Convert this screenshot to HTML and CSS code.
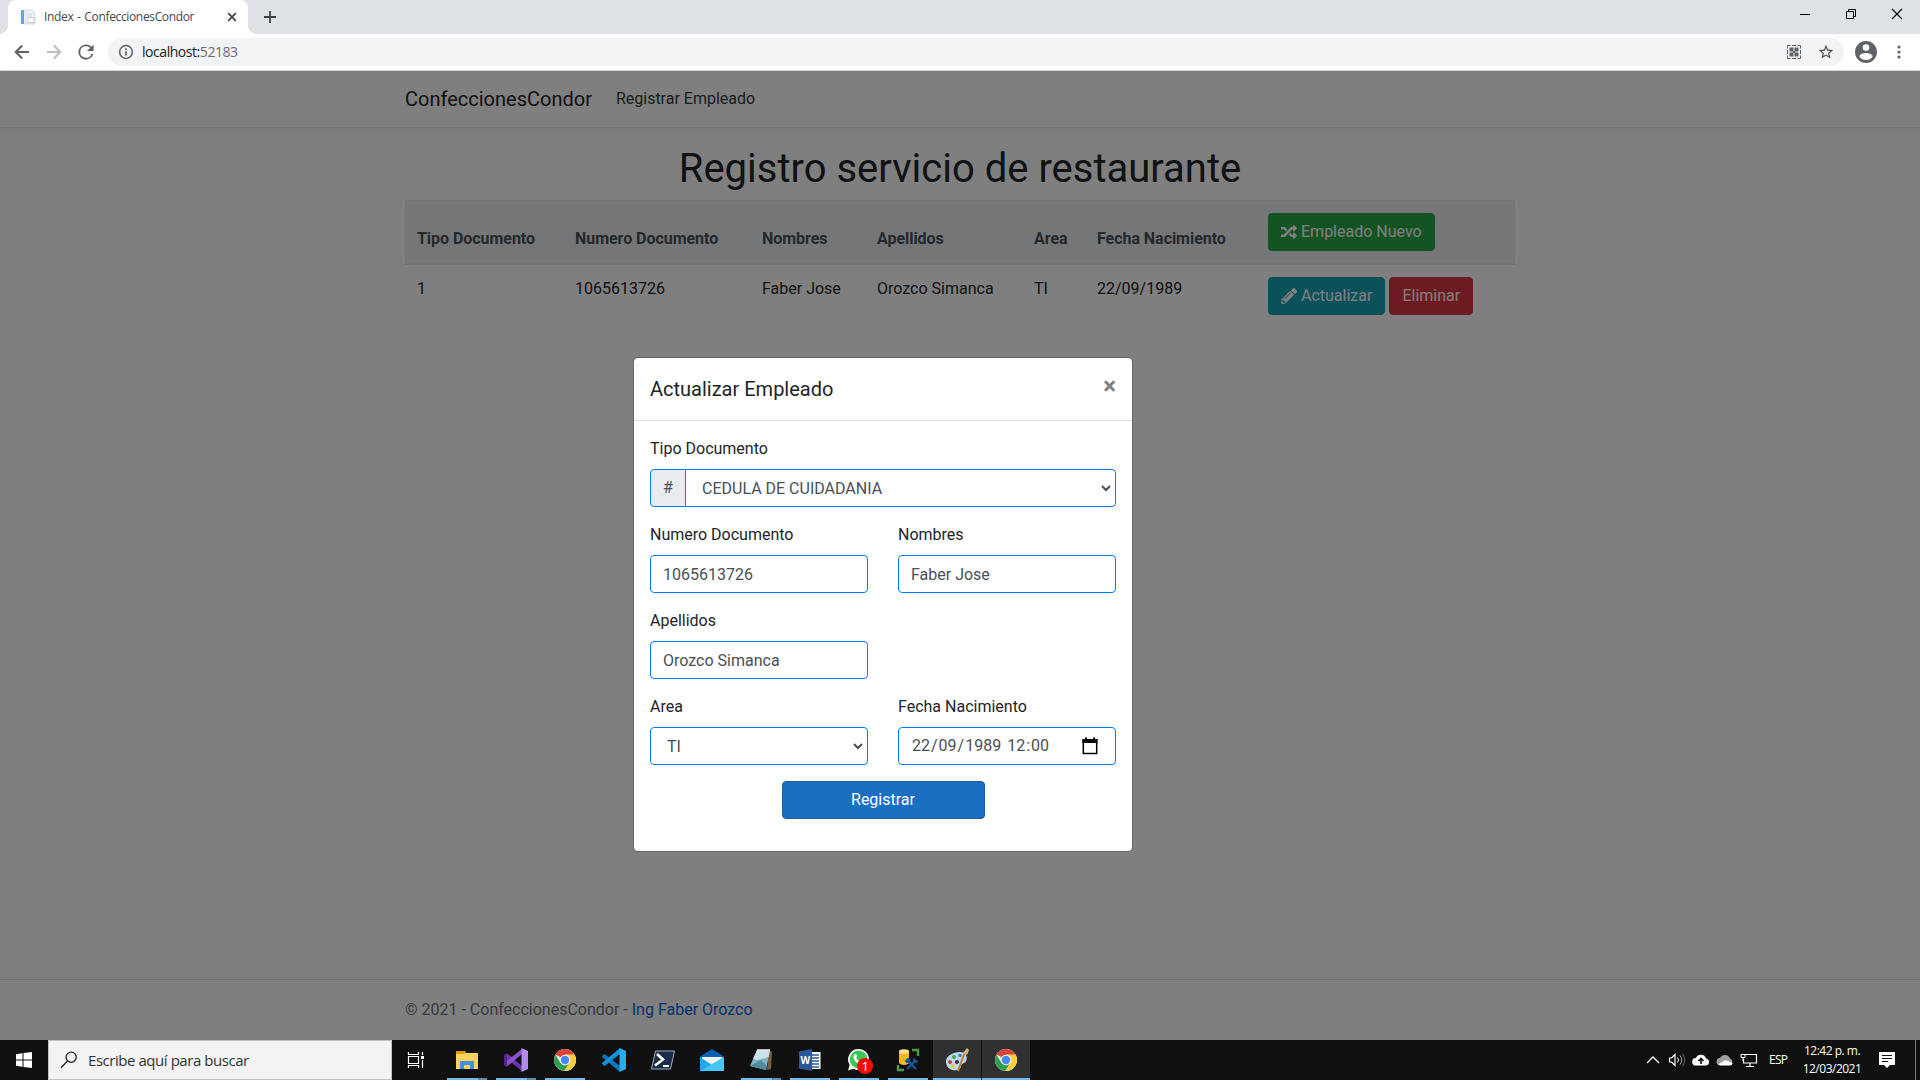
FILE: index.html
```html
<!DOCTYPE html>
<html lang="es">
<head>
<meta charset="utf-8">
<title>Index - ConfeccionesCondor</title>
<link rel="stylesheet" href="styles.css">
</head>
<body>
<svg class="defs" width="0" height="0">
  <symbol id="chrome" viewBox="0 0 24 24">
    <circle cx="12" cy="12" r="11" fill="#fff"/>
    <path d="M12 12 2.500 6.500A11 11 0 0 1 21.600 6.700H12Z" fill="#d9453a"/>
    <path d="M2.500 6.500A11 11 0 0 0 11.400 23L16.600 14.700 12 12 7.400 14.700Z" fill="#2f9e4f"/>
    <path d="M21.600 6.700A11 11 0 0 1 11.400 23L16.600 14.700 12 6.700Z" fill="#fccd3a"/>
    <circle cx="12" cy="12" r="5.300" fill="#f4f4f4"/>
    <circle cx="12" cy="12" r="4.200" fill="#4587f3"/>
  </symbol>
  <symbol id="caret" viewBox="0 0 10 10"><path d="M1 3 5 7 9 3" fill="none" stroke="#495057" stroke-width="2"/></symbol>
</svg>

<header class="browser">
  <div class="tabstrip">
    <div class="tab">
      <svg class="favicon" width="16" height="16" viewBox="0 0 16 16"><rect x="1" y="1" width="3" height="14" fill="#64a6d4"/><path d="M5 1h7l3 3v11H5Z" fill="#eef1f5" stroke="#c9ced6" stroke-width=".8"/><path d="M7 5h5M7 7h5" stroke="#d3d8df"/><rect x="8" y="8.500" width="6" height="5" fill="#fff" stroke="#bcc2cc" stroke-width=".8"/></svg>
      <span class="tab-title">Index - ConfeccionesCondor</span>
      <svg class="tab-close" width="10" height="10" viewBox="0 0 10 10"><path d="M1.200 1.200 8.800 8.800M8.800 1.200 1.200 8.800" stroke="#3c4043" stroke-width="1.700"/></svg>
    </div>
    <svg class="new-tab" width="12" height="12" viewBox="0 0 12 12"><path d="M6 0v12M0 6h12" stroke="#3c4043" stroke-width="1.800"/></svg>
    <div class="window-buttons">
      <svg width="46" height="28" viewBox="0 0 46 28"><path d="M18 14.500h10" stroke="#000"/></svg>
      <svg width="46" height="28" viewBox="0 0 46 28"><path d="M18.500 11.500h7v7h-7ZM20.500 11.500v-2h7v7h-2" fill="none" stroke="#000"/></svg>
      <svg width="46" height="28" viewBox="0 0 46 28"><path d="M18 9l10 10M28 9 18 19" stroke="#000" stroke-width="1.100"/></svg>
    </div>
  </div>
  <div class="toolbar">
    <div class="nav-buttons">
      <svg width="16" height="16" viewBox="0 0 16 16"><path d="M15 8H2M8.200 1.500 1.700 8l6.500 6.500" fill="none" stroke="#5f6368" stroke-width="2"/></svg>
      <svg width="16" height="16" viewBox="0 0 16 16"><path d="M1 8h13M7.800 1.500 14.300 8l-6.500 6.500" fill="none" stroke="#bdbfc2" stroke-width="2"/></svg>
      <svg width="16" height="16" viewBox="4 4 16 16"><path d="M17.650 6.350A8 8 0 1 0 19.730 14h-2.080A6 6 0 1 1 12 6c1.660 0 3.140.690 4.220 1.780L13 11h7V4l-2.350 2.350z" fill="#5f6368" transform="translate(.6 .6) scale(.95)"/></svg>
    </div>
    <div class="omnibox">
      <svg width="16" height="16" viewBox="0 0 16 16"><circle cx="8" cy="8" r="6.400" fill="none" stroke="#5f6368" stroke-width="1.500"/><path d="M8 7.200v4.300M8 4.200v1.700" stroke="#5f6368" stroke-width="1.700"/></svg>
      <span class="url">localhost:<span class="port">52183</span></span>
      <svg class="qr" width="16" height="16" viewBox="0 0 16 16"><path d="M1.500 4.500v-3h3M6 1.500h4M11.500 1.500h3v3M14.500 6v4M14.500 11.500v3h-3M10 14.500H6M4.500 14.500h-3v-3M1.500 10V6" fill="none" stroke="#5f6368"/><path d="M3.500 3.500h4v4h-4ZM8.500 3.500h4v4h-4ZM3.500 8.500h4v4h-4ZM8.500 8.500h4v4h-4Z" fill="#5f6368"/><path d="M7 7h2v2H7Z" fill="#5f6368"/></svg>
      <svg width="16" height="16" viewBox="1 1 22 22"><path d="M22 9.240l-7.190-.620L12 2 9.190 8.630 2 9.240l5.460 4.730L5.820 21 12 17.270 18.180 21l-1.630-7.030L22 9.240zM12 15.400l-3.760 2.270 1-4.280-3.320-2.880 4.380-.380L12 6.100l1.710 4.040 4.380.380-3.320 2.880 1 4.280L12 15.400z" fill="#4a4d51"/></svg>
    </div>
    <svg class="avatar" width="22" height="22" viewBox="2 2 20 20"><path d="M12 2a10 10 0 1 0 0 20 10 10 0 0 0 0-20zm0 3a3 3 0 1 1 0 6 3 3 0 0 1 0-6zm0 14.200a7.200 7.200 0 0 1-6-3.220c.030-1.990 4-3.080 6-3.080s5.970 1.090 6 3.080a7.200 7.200 0 0 1-6 3.220z" fill="#5f6368"/></svg>
    <svg width="4" height="16" viewBox="0 0 4 16"><g fill="#5f6368"><circle cx="2" cy="3" r="1.600"/><circle cx="2" cy="8" r="1.600"/><circle cx="2" cy="13" r="1.600"/></g></svg>
  </div>
</header>

<div class="page">
  <nav class="navbar">
    <div class="container nav-row">
      <span class="brand">ConfeccionesCondor</span>
      <span class="nav-link">Registrar Empleado</span>
    </div>
  </nav>
  <main class="container">
    <h1>Registro servicio de restaurante</h1>
    <table class="table">
      <colgroup><col class="c-type"><col class="c-number"><col class="c-name"><col class="c-surname"><col class="c-area"><col class="c-date"><col></colgroup>
      <thead>
        <tr><th>Tipo Documento</th><th>Numero Documento</th><th>Nombres</th><th>Apellidos</th><th>Area</th><th>Fecha Nacimiento</th>
          <th><div class="actions"><span class="btn success"><svg width="16" height="16" viewBox="0 0 512 512"><path fill="#fff" d="M504.971 359.029c9.373 9.373 9.373 24.569 0 33.941l-80 79.984c-15.010 15.010-40.971 4.490-40.971-16.971V416h-58.785a12.004 12.004 0 0 1-8.773-3.812l-70.556-75.596 53.333-57.143L352 336h32v-39.981c0-21.438 25.943-31.998 40.971-16.971l80 79.981zM12 176h84l52.781 56.551 53.333-57.143-70.556-75.596A11.999 11.999 0 0 0 122.785 96H12c-6.627 0-12 5.373-12 12v56c0 6.627 5.373 12 12 12zm372 0v39.984c0 21.460 25.961 31.980 40.971 16.971l80-79.984c9.373-9.373 9.373-24.569 0-33.941l-80-79.981C409.943 24.021 384 34.582 384 56.019V96h-58.785a12.004 12.004 0 0 0-8.773 3.812L96 336H12c-6.627 0-12 5.373-12 12v56c0 6.627 5.373 12 12 12h110.785c3.326 0 6.503-1.381 8.773-3.812L352 176h32z"/></svg>Empleado Nuevo</span></div></th></tr>
      </thead>
      <tbody>
        <tr><td>1</td><td>1065613726</td><td>Faber Jose</td><td>Orozco Simanca</td><td>TI</td><td>22/09/1989</td>
          <td><div class="actions"><span class="btn info"><svg width="16" height="16" viewBox="0 0 512 512"><path fill="#fff" d="M497.900 142.100l-46.100 46.100c-4.700 4.700-12.300 4.700-17 0l-111-111c-4.700-4.700-4.700-12.300 0-17l46.100-46.100c18.700-18.700 49.100-18.700 67.900 0l60.100 60.100c18.800 18.700 18.800 49.100 0 67.900zM284.200 99.800L21.600 362.400.4 483.900c-2.900 16.400 11.400 30.600 27.800 27.800l121.500-21.300 262.600-262.600c4.700-4.700 4.700-12.300 0-17l-111-111c-4.800-4.700-12.400-4.700-17.100 0zM124.100 339.900c-5.500-5.500-5.500-14.300 0-19.800l154-154c5.500-5.500 14.300-5.500 19.800 0s5.500 14.300 0 19.800l-154 154c-5.500 5.500-14.300 5.500-19.800 0zM88 424h48v36.300l-64.500 11.300-31.100-31.100L51.700 376H88v48z"/></svg>Actualizar</span><span class="btn danger">Eliminar</span></div></td></tr>
      </tbody>
    </table>
  </main>
  <footer class="footer"><div class="container">© 2021 - ConfeccionesCondor - <span class="link">Ing Faber Orozco</span></div></footer>

  <div class="backdrop">
    <section class="modal">
      <div class="modal-header"><h5>Actualizar Empleado</h5><span class="close">×</span></div>
      <form class="modal-body">
        <div class="field wide"><label>Tipo Documento</label>
          <div class="group"><span class="addon">#</span><div class="control select grouped">CEDULA DE CUIDADANIA<svg width="10" height="10"><use href="#caret"/></svg></div></div></div>
        <div class="field"><label>Numero Documento</label><div class="control">1065613726</div></div>
        <div class="field"><label>Nombres</label><div class="control">Faber Jose</div></div>
        <div class="field first"><label>Apellidos</label><div class="control">Orozco Simanca</div></div>
        <div class="field first"><label>Area</label><div class="control select">TI<svg width="10" height="10"><use href="#caret"/></svg></div></div>
        <div class="field"><label>Fecha Nacimiento</label>
          <div class="control date"><div class="date-text"><span>22</span>/<span>09</span>/<span>1989</span><i></i><span>12</span>:<span>00</span></div>
            <svg width="16" height="18" viewBox="0 0 16 18"><path d="M1.300 3h13.400v13.500H1.300Z" fill="none" stroke="#000" stroke-width="1.500"/><path d="M.5 2h15v4H.5ZM3 .5h2v2H3ZM11 .5h2v2h-2Z"/></svg></div></div>
        <div class="btn primary">Registrar</div>
      </form>
    </section>
  </div>
</div>

<footer class="taskbar">
  <div class="start"><svg width="16" height="16" viewBox="0 0 16 16"><path d="M0 2.200 6.500 1.300V7.500H0ZM7.500 1.100 16 0V7.500H7.500ZM0 8.500h6.500v6.200L0 13.800ZM7.500 8.500H16V16l-8.500-1.100Z" fill="#fff"/></svg></div>
  <div class="search"><svg width="18" height="18" viewBox="0 0 18 18"><circle cx="11.200" cy="6.200" r="5.100" fill="none" stroke="#222" stroke-width="1.300"/><path d="M7.500 10 1 16.800" stroke="#222" stroke-width="1.300"/></svg><span>Escribe aquí para buscar</span></div>
  <div class="taskview"><svg width="18" height="16" viewBox="0 0 18 16"><path d="M1.500 4.500h10v7h-10ZM1.500 0v2.500h10V0M1.500 16v-2.500h10V16M15.500 0v3M15.500 8v8" fill="none" stroke="#fff" stroke-width="1.200"/><rect x="14" y="4" width="3" height="3" fill="#fff"/></svg></div>
  <div class="apps">
    <div class="app open multi"><svg width="24" height="24" viewBox="0 0 24 24"><path d="M1 3h9l1 2h12v16H1Z" fill="#ffd25d"/><path d="M1 3h9v3H1Z" fill="#e39c05"/><path d="M5 21v-8h14v8h-4v-4H9v4Z" fill="#3c94dc"/></svg></div>
    <div class="app open multi"><svg width="24" height="24" viewBox="0 0 24 24"><path d="M0 7 3 5.500 18 18v5L0 9Z" fill="#6c35b0"/><path d="m0 17 3 1.500L18 6V1L0 15Z" fill="#8b50cb"/><path d="M0 7l3-1.500v13L0 17Z" fill="#562290"/><path d="M17.500 0 24 3v18l-6.500 3Z" fill="#b48aed"/></svg></div>
    <div class="app open"><svg width="24" height="24"><use href="#chrome"/></svg></div>
    <div class="app"><svg width="24" height="24" viewBox="0 0 24 24"><path d="M0 8 2.500 6 18 18v6L0 9Z" fill="#0a77bd"/><path d="m0 16 2.500 2L18 6V0L0 15Z" fill="#1292dd"/><path d="M17.500 0 24 3v18l-6.500 3Z" fill="#2aaaf2"/></svg></div>
    <div class="app"><svg width="24" height="20" viewBox="0 0 24 20"><path d="M4.500 1H23.500L19.500 19H.5Z" fill="#1b2c47" stroke="#9caac5"/><path d="m6 4 6 5.500L4 15.500" fill="none" stroke="#fff" stroke-width="2.600"/><path d="M12 16h6" stroke="#fff" stroke-width="2"/></svg></div>
    <div class="app"><svg width="24" height="24" viewBox="0 0 24 24"><path d="M0 8.500 12 1l12 7.500V14H0Z" fill="#0861b2"/><path d="M2 9h20v8H2Z" fill="#f4f4f4"/><path d="M0 9l12 8L24 9v14H0Z" fill="#20a7ec"/><path d="M0 23 24 9v14Z" fill="#42c7fa"/></svg></div>
    <div class="app open multi"><svg width="24" height="24" viewBox="0 0 24 24"><path d="M20 2l3 2-1 17-4 1Z" fill="#755e3d"/><path d="M8 2h13l-4 20L1 18Z" fill="#7fb2c0"/><path d="M8 2h13l-1.500 7-11 3-4.500-1Z" fill="#c6e3e7"/><path d="M1 18l11-6 6 6-1 4Z" fill="#4f8a9d"/><path d="M8 2h13" stroke="#eef2ef" stroke-width="1.500"/></svg></div>
    <div class="app open"><svg width="24" height="24" viewBox="0 0 24 24"><path d="M11 4h11.500v17H11Z" fill="#fff"/><path d="M14 7h7M14 10h7M14 13h7M14 16h7M14 19h7" stroke="#2b579a" stroke-width="1.300"/><path d="M1 3.500 14 1v22L1 20.500Z" fill="#2b579a"/><text x="2.600" y="16" class="word-letter">W</text></svg></div>
    <div class="app open"><svg class="chat" width="26" height="26" viewBox="0 0 26 26"><path d="M11.500 1a10.500 10.500 0 1 1-5 19.700L1 22.500l1.600-5.500A10.500 10.500 0 0 1 11.500 1Z" fill="#eff6ef"/><circle cx="11.600" cy="11.400" r="8.800" fill="#3cc653"/><path d="M7.500 6.500c1.500-1.300 2.200.3 2.700 1.700l-1 1.600c1 2 2.200 3 4 3.800l1.500-1.500c1.500.6 3 1.200 2.300 2.600-2.200 3.500-6 1.200-8-.8S5.500 9 7.500 6.500Z" fill="#fff"/><circle cx="18" cy="18" r="8" fill="#f70b0b"/><text x="14.500" y="22.800" class="badge">1</text></svg></div>
    <div class="app open"><svg width="24" height="24" viewBox="0 0 24 24"><path d="M3 3v12c2 2.500 8 2.500 10 0V3Z" fill="#f5b91f"/><ellipse cx="8" cy="3.500" rx="5" ry="2.200" fill="#ffe18a"/><path d="M16 2h6v6M2 17v5h6" fill="none" stroke="#4c9950" stroke-width="2.400"/><path d="m11 12 9 9M20 12l-9 9" stroke="#14599c" stroke-width="2.400"/><path d="m9 13 3-3 2 2-3 3ZM18 10v4h4" fill="#14599c" stroke="#14599c"/></svg></div>
    <div class="app open active"><svg width="24" height="24" viewBox="0 0 24 24"><path d="M1 15C0 8 8 4 15 4c6 0 8 5 6 9-1 3-5 2-5 5 0 4-5 5-9 4-3-1-5-3-6-7Z" fill="#b9d9ee"/><circle cx="5" cy="14" r="2" fill="#ca3f2e"/><circle cx="9" cy="9" r="2" fill="#45a953"/><circle cx="15" cy="7.500" r="1.800" fill="#3d7fd0"/><circle cx="8" cy="18" r="2" fill="#efc53a"/><circle cx="12" cy="14" r="2" fill="#303030"/><path d="M20 4 13 23" stroke="#cb782d" stroke-width="2"/><path d="m18 5 4-5 2 2-2 5Z" fill="#dcb477"/></svg></div>
    <div class="app open active"><svg width="24" height="24"><use href="#chrome"/></svg></div>
  </div>
  <div class="tray">
    <svg width="24" height="20" viewBox="0 0 24 20"><path d="M6 13l6-6 6 6" fill="none" stroke="#fff" stroke-width="1.300"/></svg>
    <svg width="24" height="20" viewBox="0 0 24 20"><path d="M4.500 8h2L10 4.500v11L6.500 12h-2Z" fill="none" stroke="#fff" stroke-width="1.200"/><path d="M12.500 7.500q2 2.500 0 5" fill="none" stroke="#fff"/><path d="M15 5.500q3.500 4.500 0 9" fill="none" stroke="#aaa"/><path d="M17.500 4q4.500 6 0 12" fill="none" stroke="#666"/></svg>
    <svg width="24" height="20" viewBox="0 0 24 20"><path d="M7 15.500a3.700 3.700 0 0 1-.2-7.400 5.500 5.500 0 0 1 10.300.3A3.600 3.600 0 0 1 17 15.500Z" fill="#fff"/><path d="M12 14V9M9.500 11 12 8.500l2.500 2.500" fill="none" stroke="#101010" stroke-width="1.600"/></svg>
    <svg width="24" height="20" viewBox="0 0 24 20"><path d="M7 15a3.500 3.500 0 0 1 0-7 5.500 5.500 0 0 1 10 .500A3.400 3.400 0 0 1 17 15Z" fill="#9d9d9d"/><path d="M5 14.500 12.500 10l7 3a2.500 2.500 0 0 1-2 2.500H7Z" fill="#fff"/></svg>
    <svg width="24" height="20" viewBox="0 0 24 20"><path d="M8 4.500h11.500v8.500H6.500V9M13 13v3M9 16.500h8" fill="none" stroke="#fff" stroke-width="1.200"/><path d="M4 4.500h4v3H4ZM6 7.500V11" fill="#101010" stroke="#fff"/></svg>
    <span class="lang">ESP</span>
    <div class="clock"><span>12:42 p. m.</span><span>12/03/2021</span></div>
    <svg class="notice" width="16" height="16" viewBox="0 0 16 16"><path d="M0 0h16v13h-5l-3 3-3-3H0Z" fill="#fff"/><path d="M3 3.500h10M3 6.500h10M3 9.500h6" stroke="#101010"/></svg>
  </div>
</footer>
</body>
</html>
```

FILE: styles.css
```css
* { box-sizing: border-box; }
body { margin: 0; width: 1920px; height: 1080px; overflow: hidden; display: flex; flex-direction: column; font: 16px/1.5 Roboto, sans-serif; color: #212529; background: #fff; }
svg { display: block; flex: none; }
.defs { position: absolute; }

/* Browser window */
.browser { height: 71px; border-bottom: 1px solid #d6d9dc; font-family: "Open Sans", sans-serif; }
.tabstrip { height: 34px; background: #dee1e6; display: flex; align-items: center; padding-left: 8px; }
.tab { position: relative; width: 240px; height: 34px; background: #fff; border-radius: 8px 8px 0 0; display: flex; align-items: center; padding: 0 11px 0 12px; }
.tab::before, .tab::after { content: ""; position: absolute; bottom: 0; width: 8px; height: 8px; }
.tab::before { left: -8px; background: radial-gradient(circle at 0 0, #dee1e6 7.5px, #fff 8px); }
.tab::after { right: -8px; background: radial-gradient(circle at 100% 0, #dee1e6 7.5px, #fff 8px); }
.tab-title { margin-left: 8px; font-size: 12px; letter-spacing: -.35px; word-spacing: 1px; color: #45484c; white-space: nowrap; }
.tab-close { margin-left: auto; }
.new-tab { margin-left: 16px; }
.window-buttons { display: flex; margin-left: auto; align-self: flex-start; }
.toolbar { height: 36px; display: flex; align-items: center; padding-left: 14px; }
.nav-buttons { display: flex; flex: none; gap: 16px; width: 94px; }
.omnibox { flex: none; width: 1736px; height: 28px; border-radius: 14px; background: #f1f3f4; display: flex; align-items: center; padding: 0 10px; }
.url { margin-left: 8px; font-size: 14px; letter-spacing: -.45px; line-height: 20px; color: #202124; }
.port { color: #6b6f74; }
.qr { margin-left: auto; margin-right: 16px; }
.avatar { margin: 0 19.5px 0 11px; }

/* Site */
.page { position: relative; height: 969px; display: flex; flex-direction: column; }
.container { width: 1140px; margin: 0 auto; padding: 0 15px; }
.navbar { height: 57px; padding: 8px 0; border-bottom: 1px solid #dee2e6; box-shadow: 0 4px 12px rgba(0,0,0,.05); }
.nav-row { display: flex; align-items: center; height: 40px; }
.brand { font-size: 20px; line-height: 30px; margin-right: 24px; }
.nav-link { color: #343a40; }
main.container { margin-top: 16px; flex: 1; }
h1 { margin: 0 0 7px; padding-top: 1px; font-size: 40px; line-height: 48px; font-weight: 400; text-align: center; }
.table { width: 1110px; table-layout: fixed; border-collapse: collapse; }
.c-type { width: 158px; } .c-number { width: 187px; } .c-name { width: 115px; } .c-surname { width: 157px; } .c-area { width: 63px; } .c-date { width: 171px; }
th, td { padding: 12px; border-top: 1px solid #dee2e6; vertical-align: top; text-align: left; white-space: nowrap; }
th { vertical-align: bottom; background: #e9ecef; color: #495057; border-bottom: 2px solid #dee2e6; font-weight: 700; letter-spacing: -.04px; }
.actions { display: flex; gap: 4px; font-weight: 400; letter-spacing: 0; }
.btn { display: flex; align-items: center; gap: 4px; height: 38px; padding: 0 12px; border: 1px solid; border-radius: 4px; color: #fff; }
.btn svg { margin-bottom: 1px; }
.success { background: #28a745; border-color: #28a745; }
.info { background: #17a2b8; border-color: #17a2b8; }
.danger { background: #dc3545; border-color: #dc3545; }
.footer { border-top: 1px solid #dee2e6; line-height: 60px; color: #6c757d; }
.link { color: #0366d6; }

/* Dialog */
.backdrop { position: absolute; inset: 0; background: rgba(0,0,0,.5); padding: 286px 0 0 633px; }
.modal { width: 500px; height: 495px; background: #fff; background-clip: padding-box; border: 1px solid rgba(0,0,0,.2); border-radius: 5px; }
.modal-header { height: 63px; padding: 16px; display: flex; justify-content: space-between; border-bottom: 1px solid #dee2e6; }
h5 { margin: 0; font-size: 20px; line-height: 30px; font-weight: 400; }
.close { font-size: 24px; line-height: 24px; font-weight: 700; color: #808080; }
.modal-body { margin: 0; padding: 16px; display: grid; grid-template-columns: 218px 218px; gap: 16px 30px; }
.wide { grid-column: 1 / 3; }
.first { grid-column: 1; }
.field label { display: block; margin-bottom: 8px; }
.control { flex: 1; height: 38px; padding: 2px 12px 0; display: flex; align-items: center; border: 1px solid #007bff; border-radius: 4px; color: #495057; }
.select { justify-content: space-between; padding: 2px 4px 0 16px; }
.select svg { margin-bottom: 2px; }
.group { display: flex; }
.addon { width: 36px; height: 38px; line-height: 36px; text-align: center; background: #e9ecef; color: #495057; border: 1px solid #007bff; border-radius: 4px 0 0 4px; }
.grouped { margin-left: -1px; border-radius: 0 4px 4px 0; }
.date { justify-content: space-between; padding: 0 17px 0 12px; }
.date-text { display: flex; }
.date-text span { padding: 0 1px; }
.date-text i { width: 4px; }
.primary { grid-column: 1 / 3; justify-self: center; width: 203px; justify-content: center; background: #1b6ec2; border-color: #1861ac; }

/* Taskbar */
.taskbar { height: 40px; background: #101010; display: flex; align-items: center; font-family: "Open Sans", sans-serif; color: #fff; }
.start { width: 48px; display: flex; justify-content: center; }
.search { width: 344px; height: 40px; background: #f3f3f3; border: 1px solid #c4c4c4; display: flex; align-items: center; gap: 10px; padding-left: 11px; color: #333; font-size: 15px; letter-spacing: -.45px; }
.taskview { width: 51px; padding-left: 15px; }
.apps { display: flex; gap: 1px; }
.app { position: relative; width: 48px; height: 40px; display: flex; align-items: center; justify-content: center; }
.open::after { content: ""; position: absolute; left: 4px; right: 4px; bottom: 0; height: 2px; background: #76b9ed; }
.multi::after { background: linear-gradient(90deg, #76b9ed 31px, #47708f 31px, #5c8cb0 32px); }
.active { background: #303030; }
.active::after { left: 0; right: 0; }
.chat { margin: 2px 0 0 2px; }
.word-letter { font: 700 10px "Open Sans", sans-serif; fill: #fff; }
.badge { font: 13px "Open Sans", sans-serif; fill: #fff; }
.tray { margin-left: auto; display: flex; align-items: center; height: 40px; width: 279px; }
.lang { width: 19px; margin-left: 8px; font-size: 12px; letter-spacing: -.7px; }
.clock { width: 60px; margin-left: 14px; display: flex; flex-direction: column; align-items: center; font-size: 12px; line-height: 18px; letter-spacing: -.5px; white-space: nowrap; }
.notice { margin-left: 17px; }
.tray::after { content: ""; margin-left: 20px; width: 1px; height: 40px; background: #777; }
```
